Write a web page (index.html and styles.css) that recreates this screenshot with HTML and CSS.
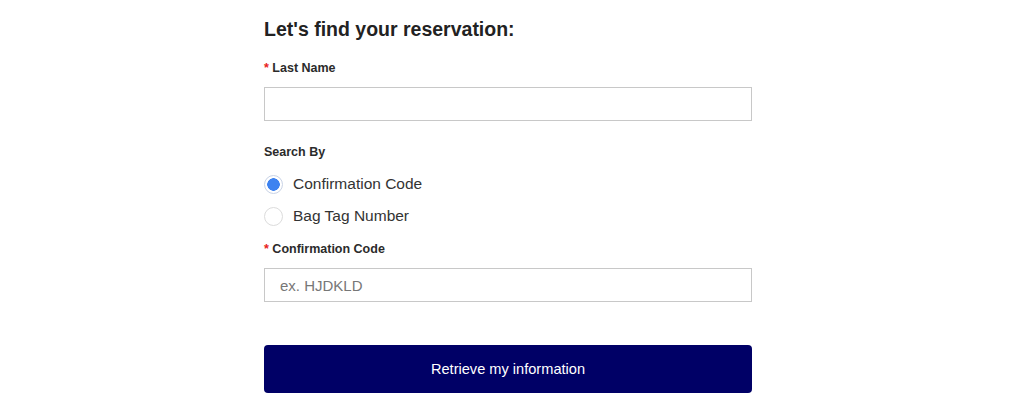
FILE: index.html
```html
<!DOCTYPE html>
<html lang="en">
<head>
<meta charset="utf-8">
<title>Find reservation</title>
<link rel="stylesheet" href="styles.css">
</head>
<body>
<main class="form">
  <h1 class="title">Let's find your reservation:</h1>
  <div class="field">
    <label class="label"><span class="req">*</span> Last Name</label>
    <input class="input" type="text">
  </div>
  <div class="field search">
    <div class="label">Search By</div>
    <label class="radio"><span class="dot checked"></span><span>Confirmation Code</span></label>
    <label class="radio"><span class="dot"></span><span>Bag Tag Number</span></label>
  </div>
  <div class="field">
    <label class="label"><span class="req">*</span> Confirmation Code</label>
    <input class="input" type="text" placeholder="ex. HJDKLD">
  </div>
  <button class="btn" type="button">Retrieve my information</button>
</main>
</body>
</html>
```
FILE: styles.css
```css
* { box-sizing: border-box; }
html, body { margin: 0; padding: 0; background: #fff; }
body { font-family: "Liberation Sans", Arial, sans-serif; color: #2b2b2b; }
.form { width: 488px; margin-left: 264px; padding-top: 17px; display: flex; flex-direction: column; }
.title { font-size: 19.5px; font-weight: bold; margin: 0 0 20px; line-height: 24px; color: #222; }
.field { display: flex; flex-direction: column; }
.label { font-size: 12.5px; font-weight: bold; line-height: 15px; color: #2b2b2b; margin-bottom: 11px; }
.req { color: #e8211d; }
.input { height: 34px; width: 100%; border: 1px solid #c8c8c8; border-radius: 0; padding: 0 15px; font-family: "Liberation Sans", Arial, sans-serif; font-size: 15px; color: #333; background: #fff; outline: none; margin-bottom: 0; }
.input::placeholder { color: #777; }
.field + .field { margin-top: 24px; }
.search .label { margin-bottom: 8px; }
.radio { display: flex; align-items: center; gap: 10px; font-size: 15.5px; color: #333; height: 32px; }
.dot { width: 19px; height: 19px; border-radius: 50%; border: 1px solid #dcdcdc; background: #fff; flex: none; }
.dot.checked { border-color: #c9d3e6; background: radial-gradient(circle, #3d82f0 0 6px, #fff 6.5px); }
.search + .field { margin-top: 10px; }
.btn { margin-top: 43px; height: 48px; width: 100%; border: none; border-radius: 4px; background: #000066; color: #fff; font-family: "Liberation Sans", Arial, sans-serif; font-size: 14.6px; }
```
